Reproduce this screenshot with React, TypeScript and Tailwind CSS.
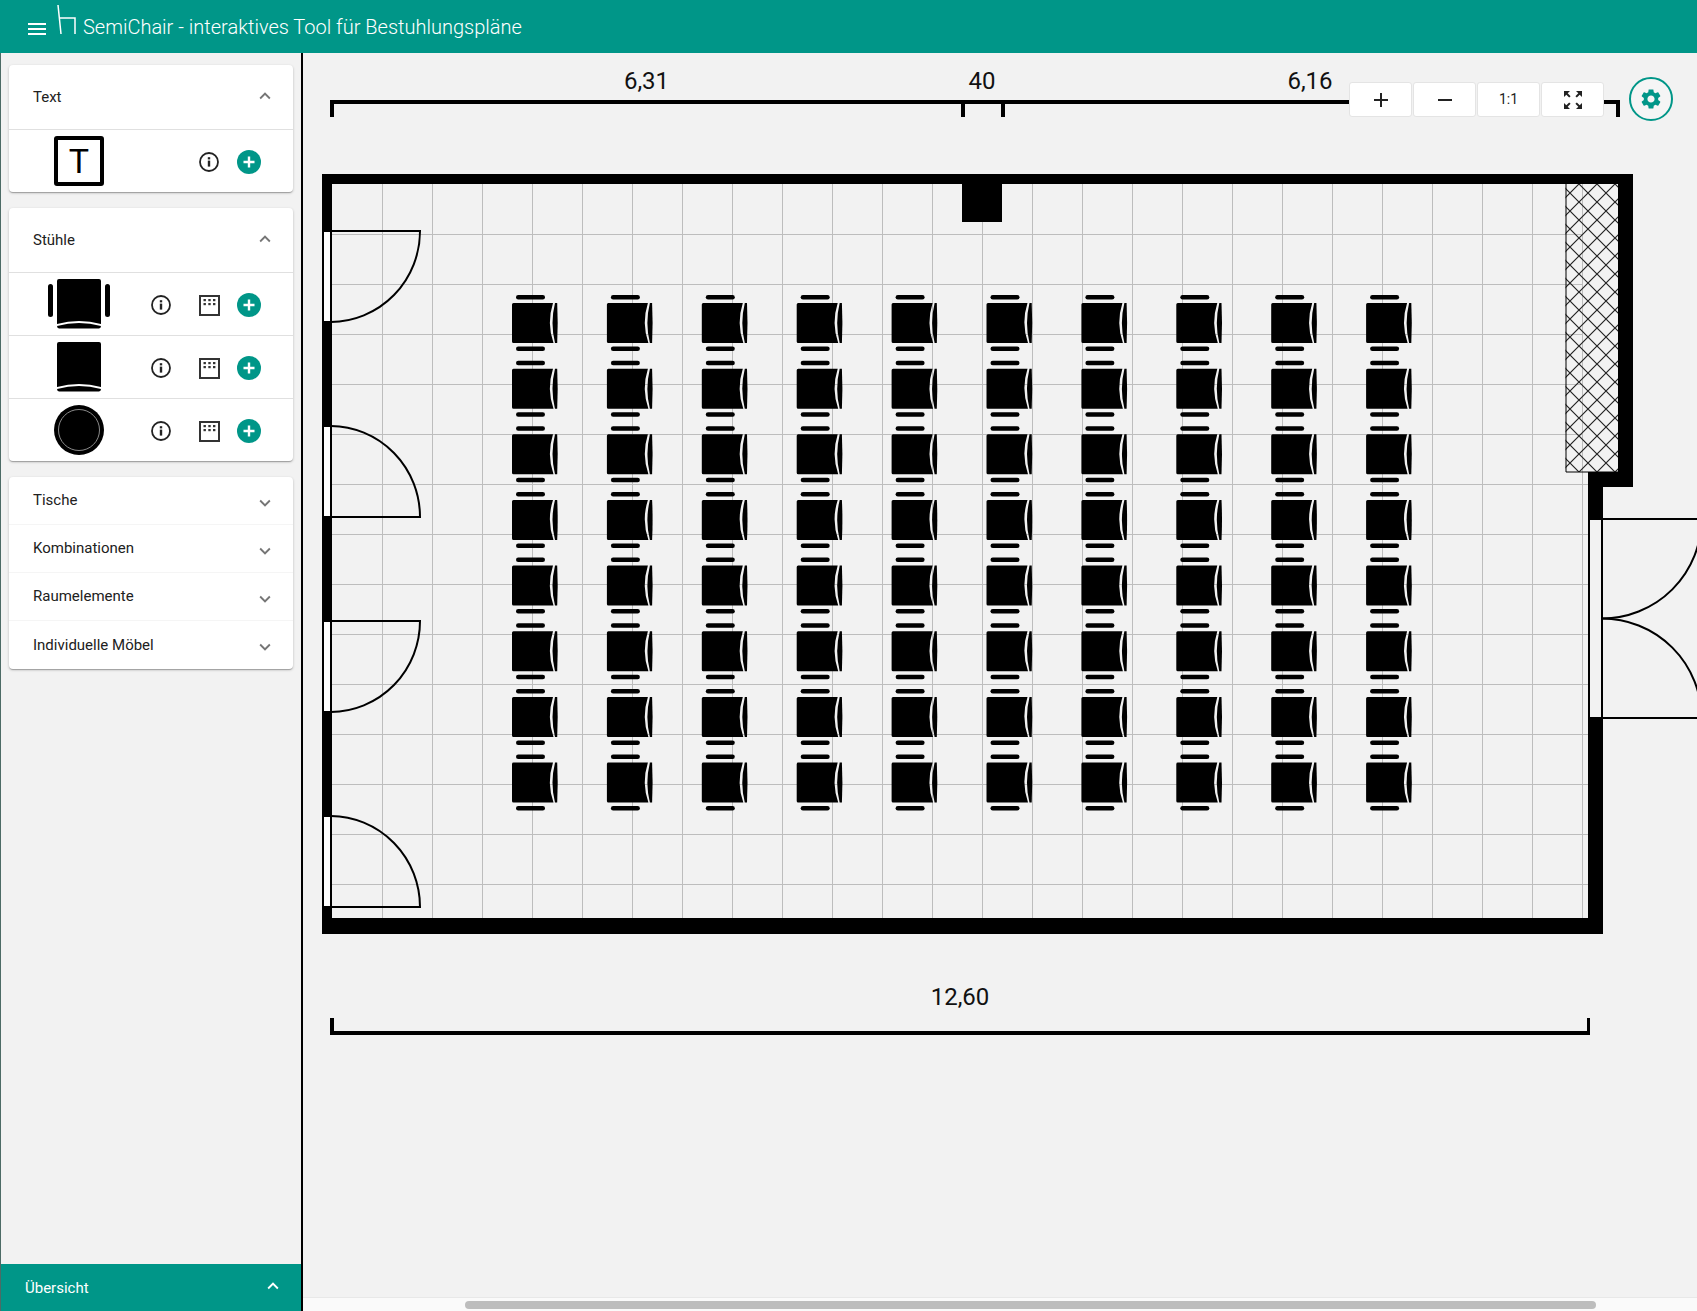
import React from 'react';

const TEAL = '#009688';

const ChevronIcon: React.FC<{ up?: boolean; white?: boolean }> = ({ up, white }) => (
  <svg width="22" height="22" viewBox="0 0 24 24" fill={white ? '#fff' : 'rgba(0,0,0,.54)'}>
    {up ? (
      <path d="M12 8l-6 6 1.41 1.41L12 10.83l4.59 4.58L18 14z" />
    ) : (
      <path d="M16.59 8.59L12 13.17 7.41 8.59 6 10l6 6 6-6z" />
    )}
  </svg>
);

const InfoIcon = () => (
  <svg width="24" height="24" viewBox="0 0 24 24" fill="none">
    <circle cx="12" cy="12" r="9" stroke="#222" strokeWidth="1.8" />
    <rect x="10.8" y="10.6" width="2.4" height="6" fill="#222" />
    <rect x="10.8" y="7.2" width="2.4" height="2.2" fill="#222" />
  </svg>
);

const GridIcon = () => (
  <svg width="24" height="24" viewBox="0 0 24 24" fill="none">
    <rect x="3" y="3" width="19" height="19" stroke="#333" strokeWidth="2" />
    <g fill="#333">
      <rect x="6.5" y="6" width="2.4" height="2.2" />
      <rect x="11.3" y="6" width="2.4" height="2.2" />
      <rect x="16" y="6" width="2.4" height="2.2" />
      <rect x="6.5" y="10" width="2.4" height="2.2" />
      <rect x="11.3" y="10" width="2.4" height="2.2" />
      <rect x="16" y="10" width="2.4" height="2.2" />
    </g>
  </svg>
);

const PlusButton = () => (
  <svg width="24" height="24" viewBox="0 0 24 24">
    <circle cx="12" cy="12" r="12" fill={TEAL} />
    <path d="M12 6.5v11M6.5 12h11" stroke="#fff" strokeWidth="2.4" />
  </svg>
);

const ArmChairIcon: React.FC<{ arms?: boolean }> = ({ arms }) => (
  <svg width="62" height="50" viewBox="0 0 62 50">
    {arms && <rect x="0" y="5" width="5" height="33" rx="2.5" fill="#000" />}
    {arms && <rect x="57" y="5" width="5" height="33" rx="2.5" fill="#000" />}
    <path d="M11 0H51Q53 0 53 2V45Q31 39 9 45V2Q9 0 11 0Z" fill="#000" />
    <path d="M9 47Q31 41 53 47Q53 49 51 49.5H11Q9 49 9 47Z" fill="#000" />
  </svg>
);

const RoundChairIcon = () => (
  <svg width="50" height="50" viewBox="0 0 50 50">
    <circle cx="25" cy="25" r="25" fill="#000" />
    <circle cx="25" cy="25" r="20.5" fill="none" stroke="#8a8a8a" strokeWidth="1" />
  </svg>
);

const ItemRow: React.FC<{ icon: React.ReactNode; grid?: boolean }> = ({ icon, grid }) => (
  <div className="flex h-[63px] items-center border-t border-[#e0e0e0] pr-[32px]">
    <div className="flex w-[140px] shrink-0 items-center justify-center">{icon}</div>
    <div className="ml-auto mt-[2px] flex items-center gap-[16px]">
      <InfoIcon />
      {grid && (
        <div className="ml-[8px]">
          <GridIcon />
        </div>
      )}
      <PlusButton />
    </div>
  </div>
);

const Card: React.FC<{ children: React.ReactNode }> = ({ children }) => (
  <div className="rounded-[4px] bg-white shadow-[0_1px_3px_0_rgba(0,0,0,.2),0_1px_1px_0_rgba(0,0,0,.14),0_2px_1px_-1px_rgba(0,0,0,.12)]">
    {children}
  </div>
);

const OpenHeader: React.FC<{ title: string }> = ({ title }) => (
  <div className="flex h-[64px] items-center justify-between pl-[24px] pr-[17px] text-[15px] text-[#212121]">
    <span>{title}</span>
    <span className="-mt-[3px]">
      <ChevronIcon up />
    </span>
  </div>
);

const collapsed = ['Tische', 'Kombinationen', 'Raumelemente', 'Individuelle Möbel'];

const Sidebar = () => (
  <aside className="flex w-[303px] shrink-0 flex-col border-r-2 border-l border-r-black border-l-[#4d6b66] bg-[#f2f2f2]">
    <div className="flex flex-col gap-[16px] pl-[8px] pr-[8px] pt-[12px]">
      <Card>
        <OpenHeader title="Text" />
        <ItemRow
          icon={
            <div className="flex h-[50px] w-[50px] items-center justify-center rounded-[3px] border-[4px] border-black text-[34px] leading-none text-black">
              T
            </div>
          }
        />
      </Card>
      <Card>
        <OpenHeader title="Stühle" />
        <ItemRow grid icon={<ArmChairIcon arms />} />
        <ItemRow grid icon={<ArmChairIcon />} />
        <ItemRow grid icon={<RoundChairIcon />} />
      </Card>
      <Card>
        {collapsed.map((label, i) => (
          <div
            key={label}
            className={`flex h-[48px] items-center justify-between pl-[24px] pr-[17px] text-[15px] text-[#212121] ${
              i < collapsed.length - 1 ? 'border-b border-[#f5f5f5]' : ''
            }`}
          >
            <span>{label}</span>
            <span className="mt-[4px]">
              <ChevronIcon />
            </span>
          </div>
        ))}
      </Card>
    </div>
    <div className="mt-auto flex h-[47px] items-center justify-between bg-[#009688] pl-[24px] pr-[17px] text-[15px] text-white">
      <span className="mt-[1px]">Übersicht</span>
      <span className="-mt-[4px]">
        <ChevronIcon up white />
      </span>
    </div>
  </aside>
);

// chair in the plan, seat 40x40, backrest on the right side
const PlanChair: React.FC<{ x: number; y: number }> = ({ x, y }) => (
  <g transform={`translate(${x} ${y})`} fill="#000">
    <rect x="4" y="-8" width="29" height="4.5" rx="2.25" />
    <rect x="4" y="43.5" width="29" height="4.5" rx="2.25" />
    <path d="M1.5 0H41Q34.5 20 41.5 40H1.5Q0 40 0 38.5V1.5Q0 0 1.5 0Z" />
    <path d="M43 0H45.2Q46.2 20 45.2 40H43Q38 20 43 0Z" />
  </g>
);

const PlanDoor: React.FC<{ y: number; lineOnTop: boolean }> = ({ y, lineOnTop }) => (
  <g fill="none" stroke="#000" strokeWidth="2">
    <rect x="323" y={y} width="8" height="91" fill="#fff" />
    {lineOnTop ? (
      <path d={`M331 ${y}H420A90 91 0 0 1 331 ${y + 91}`} />
    ) : (
      <path d={`M331 ${y}A90 91 0 0 1 420 ${y + 91}H331`} />
    )}
  </g>
);

const gridXs = Array.from({ length: 25 }, (_, i) => 382 + i * 50);
const gridYs = Array.from({ length: 14 }, (_, i) => 234 + i * 50);
const chairXs = Array.from({ length: 10 }, (_, i) => 512 + i * 94.9);
const chairYs = Array.from({ length: 8 }, (_, i) => 303 + i * 65.65);

const FloorPlan = () => (
  <svg width="1394" height="1258" viewBox="303 53 1394 1258" className="block">
    <defs>
      <pattern id="hatch" width="18" height="18" patternUnits="userSpaceOnUse" x="1579" y="184">
        <path d="M0 0L18 18M18 0L0 18" stroke="#222" strokeWidth="1.2" />
      </pattern>
    </defs>

    {/* measures */}
    <g fontFamily="Roboto, sans-serif" fontSize="24" fill="#111" textAnchor="middle">
      <text x="646.5" y="89">6,31</text>
      <text x="982" y="89">40</text>
      <text x="1310" y="89">6,16</text>
      <text x="960" y="1005">12,60</text>
    </g>
    <g fill="#000">
      <rect x="330" y="100" width="1290" height="4" />
      <rect x="330" y="100" width="4" height="17" />
      <rect x="961" y="100" width="4" height="17" />
      <rect x="1001" y="100" width="4" height="17" />
      <rect x="1616" y="100" width="4" height="17" />
      <rect x="330" y="1031" width="1260" height="4" />
      <rect x="330" y="1018" width="4" height="17" />
      <rect x="1587" y="1018" width="3" height="17" />
    </g>

    {/* grid */}
    <g stroke="#bdbdbd" strokeWidth="1">
      {gridXs.map((x) => (
        <line key={x} x1={x + 0.5} y1="184" x2={x + 0.5} y2="918" />
      ))}
      {gridYs.map((y) => (
        <line key={y} x1="332" y1={y + 0.5} x2={y < 472 ? 1583 : 1588} y2={y + 0.5} />
      ))}
    </g>

    {/* hatched area */}
    <rect x="1565.5" y="184" width="53" height="288" fill="url(#hatch)" />
    <path d="M1566 184V472H1618" fill="none" stroke="#000" strokeWidth="1" />

    {/* walls */}
    <g fill="#000">
      <rect x="322" y="174" width="1311" height="10" />
      <rect x="322" y="174" width="10" height="760" />
      <rect x="322" y="918" width="1281" height="16" />
      <rect x="1618" y="174" width="15" height="313" />
      <rect x="1588" y="472" width="45" height="15" />
      <rect x="1588" y="472" width="15" height="47" />
      <rect x="1588" y="718" width="15" height="216" />
      <rect x="962" y="184" width="40" height="38" />
    </g>

    {/* doors */}
    <PlanDoor y={231} lineOnTop />
    <PlanDoor y={426} lineOnTop={false} />
    <PlanDoor y={621} lineOnTop />
    <PlanDoor y={816} lineOnTop={false} />
    <g fill="none" stroke="#000" strokeWidth="2">
      <rect x="1589" y="519" width="13" height="199" fill="#f2f2f2" />
      <path d="M1602 519H1700M1602 718H1700" />
      <path d="M1602 618.5A99.5 99.5 0 0 0 1701.5 519" />
      <path d="M1602 618.5A99.5 99.5 0 0 1 1701.5 718" />
    </g>

    {/* chairs */}
    {chairYs.map((y) => chairXs.map((x) => <PlanChair key={`${x}-${y}`} x={x} y={y} />))}
  </svg>
);

const toolButton =
  'flex h-[35px] w-[63px] items-center justify-center rounded-[3px] border border-[#e4e4e4] bg-white text-[14px] text-[#222]';

const App = () => (
  <div className="flex h-screen flex-col overflow-hidden bg-[#f2f2f2] font-[Roboto,sans-serif]">
    <header className="flex h-[53px] shrink-0 items-center bg-[#009688] pl-[28px] text-white">
      <svg width="18" height="12" viewBox="0 0 18 12" stroke="#fff" strokeWidth="2" className="mt-[4px]">
        <path d="M0 1H18M0 6H18M0 11H18" />
      </svg>
      <svg width="20" height="32" viewBox="0 0 20 32" fill="none" stroke="#fff" strokeWidth="1.5" className="ml-[11px] mt-[-13px]">
        <path d="M1 1L4 30M3 14H18V30" />
      </svg>
      <span className="ml-[6px] text-[20px] font-light">SemiChair - interaktives Tool für Bestuhlungspläne</span>
    </header>
    <div className="flex min-h-0 flex-1">
      <Sidebar />
      <main className="relative min-w-0 flex-1 overflow-hidden">
        <FloorPlan />
        <div className="absolute left-[1046px] top-[29px] flex gap-[1px] bg-[#f2f2f2]">
          <div className={toolButton}>
            <svg width="14" height="14" viewBox="0 0 14 14" stroke="#222" strokeWidth="2">
              <path d="M0 7H14M7 0V14" />
            </svg>
          </div>
          <div className={toolButton}>
            <svg width="14" height="14" viewBox="0 0 14 14" stroke="#222" strokeWidth="2">
              <path d="M0 7H14" />
            </svg>
          </div>
          <div className={toolButton}>1:1</div>
          <div className={toolButton}>
            <svg width="24" height="24" viewBox="0 0 24 24" fill="#222">
              <path d="M15 3l2.3 2.3-2.89 2.87 1.42 1.42L18.7 6.7 21 9V3zM3 9l2.3-2.3 2.87 2.89 1.42-1.42L6.7 5.3 9 3H3zm6 12l-2.3-2.3 2.89-2.87-1.42-1.42L5.3 17.3 3 15v6zm12-6l-2.3 2.3-2.87-2.89-1.42 1.42 2.89 2.87L15 21h6z" />
            </svg>
          </div>
        </div>
        <div className="absolute left-[1326px] top-[24px] flex h-[44px] w-[44px] items-center justify-center rounded-full border-2 border-[#009688] bg-[#f5f5f5]">
          <svg width="24" height="24" viewBox="0 0 24 24" fill="#009688">
            <path d="M19.14 12.94c.04-.3.06-.61.06-.94 0-.32-.02-.64-.07-.94l2.03-1.58c.18-.14.23-.41.12-.61l-1.92-3.32c-.12-.22-.37-.29-.59-.22l-2.39.96c-.5-.38-1.03-.7-1.62-.94l-.36-2.54c-.04-.24-.24-.41-.48-.41h-3.84c-.24 0-.43.17-.47.41l-.36 2.54c-.59.24-1.13.57-1.62.94l-2.39-.96c-.22-.08-.47 0-.59.22L2.74 8.87c-.12.21-.08.47.12.61l2.03 1.58c-.05.3-.09.63-.09.94s.02.64.07.94l-2.03 1.58c-.18.14-.23.41-.12.61l1.92 3.32c.12.22.37.29.59.22l2.39-.96c.5.38 1.03.7 1.62.94l.36 2.54c.05.24.24.41.48.41h3.84c.24 0 .44-.17.47-.41l.36-2.54c.59-.24 1.13-.56 1.62-.94l2.39.96c.22.08.47 0 .59-.22l1.92-3.32c.12-.22.07-.47-.12-.61l-2.01-1.58zM12 15.6c-1.98 0-3.6-1.62-3.6-3.6s1.62-3.6 3.6-3.6 3.6 1.62 3.6 3.6-1.62 3.6-3.6 3.6z" />
          </svg>
        </div>
        {/* horizontal scrollbar of the canvas */}
        <div className="absolute inset-x-0 bottom-0 h-[14px] border-t border-[#e8e8e8] bg-[#fafafa]">
          <div className="ml-[162px] mt-[3px] h-[8px] w-[1131px] rounded-full bg-[#bdbdbd]" />
        </div>
      </main>
    </div>
  </div>
);

export default App;
